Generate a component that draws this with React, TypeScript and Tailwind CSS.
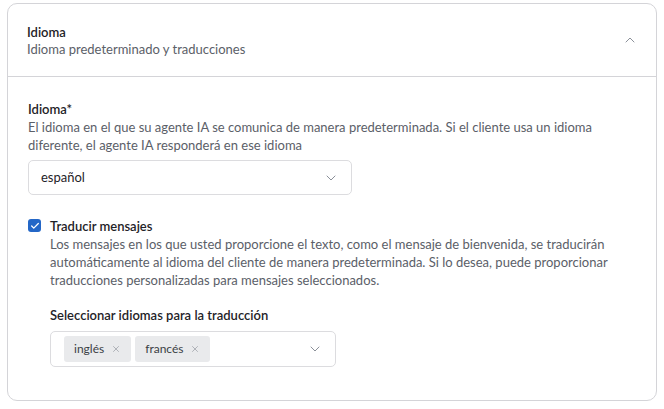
import { ChevronDown, ChevronUp, X, Check } from 'lucide-react';

const chips = ['inglés', 'francés'];

export default function App() {
  return (
    <div className="w-[664px] h-[409px] bg-white pt-[3px] px-[7px] font-['Lato',sans-serif] text-[13px]">
      <div className="h-[398px] rounded-[10px] border border-[#d4d4d8] flex flex-col">
        {/* header */}
        <div className="h-[73px] flex items-center justify-between pl-[19px] pr-[18px] border-b border-[#d4d4d8]">
          <div className="flex flex-col leading-[17px] pt-[1px]">
            <span className="font-semibold text-[#1f2328]">Idioma</span>
            <span className="text-[#5b6068]">Idioma predeterminado y traducciones</span>
          </div>
          <ChevronUp className="w-4 h-4 text-[#8b9099]" strokeWidth={1.5} />
        </div>

        {/* body */}
        <div className="pl-[20px] pt-[23px] pr-[20px] flex flex-col">
          <span className="font-semibold text-[#1f2328] leading-[18px]">Idioma*</span>
          <p className="text-[#5b6068] leading-[18px]">
            El idioma en el que su agente IA se comunica de manera predeterminada. Si el cliente usa un idioma
            <br />
            diferente, el agente IA responderá en ese idioma
          </p>
          <div className="mt-[6px] w-[324px] h-[35px] rounded-[5px] border border-[#dcdcdf] flex items-center justify-between pl-[12px] pr-[12px]">
            <span className="text-[#1f2328]">español</span>
            <ChevronDown className="w-4 h-4 text-[#8b9099]" strokeWidth={1.5} />
          </div>

          <div className="mt-[23px] flex gap-[9px]">
            <div className="mt-[1px] w-[13px] h-[13px] rounded-[3px] bg-[#2467c7] flex items-center justify-center shrink-0">
              <Check className="w-[10px] h-[10px] text-white" strokeWidth={3} />
            </div>
            <div className="flex flex-col">
              <span className="font-semibold text-[#1f2328] leading-[16px]">Traducir mensajes</span>
              <p className="text-[#5b6068] leading-[18px] mt-[1px]">
                Los mensajes en los que usted proporcione el texto, como el mensaje de bienvenida, se traducirán
                <br />
                automáticamente al idioma del cliente de manera predeterminada. Si lo desea, puede proporcionar
                <br />
                traducciones personalizadas para mensajes seleccionados.
              </p>
              <span className="mt-[17px] font-semibold text-[#1f2328] leading-[18px]">
                Seleccionar idiomas para la traducción
              </span>
              <div className="mt-[7px] w-[286px] h-[36px] rounded-[5px] border border-[#dcdcdf] flex items-center justify-between pl-[13px] pr-[12px]">
                <div className="flex gap-[4px]">
                  {chips.map(c => (
                    <div key={c} className="h-[26px] px-[10px] rounded-[3px] bg-[#e9eaec] flex items-center gap-[7px] text-[12px] text-[#3b3f45]">
                      <span>{c}</span>
                      <X className="w-[10px] h-[10px] text-[#8b9099]" strokeWidth={1.5} />
                    </div>
                  ))}
                </div>
                <ChevronDown className="w-4 h-4 text-[#8b9099]" strokeWidth={1.5} />
              </div>
            </div>
          </div>
        </div>
      </div>
    </div>
  );
}
